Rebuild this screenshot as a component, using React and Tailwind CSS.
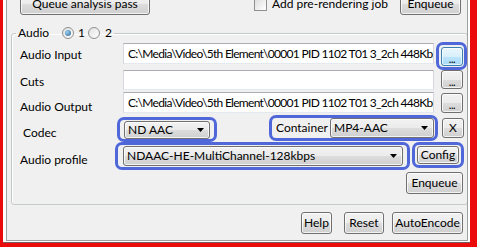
import React from "react";

const BTN =
  "flex items-center justify-center rounded-[3px] border border-[#707070] bg-[linear-gradient(#f2f2f2_0%,#ebebeb_50%,#dddddd_50%,#cfcfcf_100%)] shadow-[inset_0_0_0_1px_rgba(255,255,255,0.75)] leading-none text-black";
const BTN_HOT =
  "flex items-center justify-center rounded-[3px] border border-[#3c7fb1] bg-[linear-gradient(#eaf6fd_0%,#d9f0fc_50%,#bee6fd_50%,#a7d9f5_100%)] shadow-[inset_0_0_0_1px_rgba(255,255,255,0.7)] leading-none text-black";
const RING = "rounded-[7px] border-[3px] border-[#5067d9]";

function Btn({ className = "", hot, children }) {
  return (
    <button type="button" className={`${hot ? BTN_HOT : BTN} ${className}`}>
      {children}
    </button>
  );
}

function Dots({ className = "", hot }) {
  return (
    <Btn hot={hot} className={`w-[22px] ${className}`}>
      <span className="mt-[3px] text-[11px] tracking-[-0.5px]">...</span>
    </Btn>
  );
}

function TextBox({ value = "", className = "" }) {
  return (
    <div
      className={`flex items-center overflow-hidden whitespace-nowrap border border-[#abadb3] border-x-[#d5d8de] border-b-[#e3e9ef] bg-white pl-[4px] tracking-[-0.7px] ${className}`}
    >
      {value}
    </div>
  );
}

function Combo({ value, className = "" }) {
  return (
    <div
      className={`flex items-center rounded-[3px] border border-[#707070] bg-[linear-gradient(#f2f2f2_0%,#ebebeb_50%,#dddddd_50%,#cfcfcf_100%)] shadow-[inset_0_0_0_1px_rgba(255,255,255,0.75)] pl-[3px] pr-[5px] ${className}`}
    >
      <span className="flex-1 truncate">{value}</span>
      <svg width="7" height="4" viewBox="0 0 7 4">
        <path d="M0 0h7L3.5 4z" fill="#000" />
      </svg>
    </div>
  );
}

function Radio({ on }) {
  return (
    <span className="flex h-[12px] w-[12px] items-center justify-center rounded-full border border-[#8e8f8f] bg-[linear-gradient(135deg,#e0e0e0,#ffffff)]">
      {on && (
        <span className="h-[6px] w-[6px] rounded-full bg-[radial-gradient(circle_at_35%_35%,#9bd0f2,#2a628d)]" />
      )}
    </span>
  );
}

const PATH = "C:\\Media\\Video\\5th Element\\00001 PID 1102 T01 3_2ch 448Kbps";

export default function App() {
  return (
    <div className="h-[247px] w-[477px] bg-[#ec0b0b] pb-[4px] pl-[3px] pr-[7px] font-['Lato',sans-serif] text-[12px] text-black">
      <div className="h-full border-b border-[#7a5a5a] bg-white pb-[1px] pl-[3px] pr-[2px]">
        <div className="h-full overflow-hidden border-x border-b border-[#a0a0a0] bg-[#f0f0f0]">
          {/* top row, cut off by the window edge */}
          <div className="-mt-[7px] flex h-[22px] items-center">
            <Btn className="ml-[13px] h-[22px] w-[130px]">Queue analysis pass</Btn>
            <span className="ml-[104px] h-[13px] w-[13px] border border-[#8e8f8f] bg-[linear-gradient(135deg,#dcdcdc,#ffffff)]" />
            <span className="ml-[5px]">Add pre-rendering job</span>
            <Btn className="ml-auto mr-[6px] h-[22px] w-[61px]">Enqueue</Btn>
          </div>

          {/* Audio group */}
          <fieldset className="ml-[4px] mr-[1px] mt-[10px] h-[180px] rounded-[3px] border border-[#c5cacd] pl-[8px] shadow-[inset_1px_1px_0_#fff]">
            <legend className="-ml-[4px] px-[2px]">
              <span className="flex h-[16px] items-center">
                <span>Audio</span>
                <span className="ml-[13px]">
                  <Radio on />
                </span>
                <span className="ml-[4px]">1</span>
                <span className="ml-[3px]">
                  <Radio />
                </span>
                <span className="ml-[5px]">2</span>
              </span>
            </legend>

            {/* Audio Input */}
            <div className="flex h-[29px] items-start">
              <span className="mt-[5px] w-[103px]">Audio Input</span>
              <TextBox value={PATH} className="mt-[2px] h-[21px] w-[311px]" />
              <div className={`${RING} ml-[2px] mt-[1px] pb-[1px] pl-[2px] pr-[1px] pt-[2px]`}>
                <Dots hot className="h-[19px]" />
              </div>
            </div>

            {/* Cuts */}
            <div className="flex h-[20px] items-start">
              <span className="mt-[3px] w-[103px]">Cuts</span>
              <TextBox className="h-[20px] w-[311px]" />
              <Dots className="ml-[7px] h-[19px]" />
            </div>

            {/* Audio Output */}
            <div className="mt-[2px] flex h-[22px] items-start">
              <span className="mt-[6px] w-[103px]">Audio Output</span>
              <TextBox value={PATH} className="h-[21px] w-[311px]" />
              <Dots className="ml-[7px] mt-[1px] h-[20px]" />
            </div>

            {/* Codec / Container */}
            <div className="flex h-[27px] items-start">
              <span className="mt-[10px] w-[97px] pl-[3px]">Codec</span>
              <div className={`${RING} mt-[3px] px-[4px] pt-[1px]`}>
                <Combo value="ND AAC" className="h-[18px] w-[86px]" />
              </div>
              <div className={`${RING} ml-[52px] mt-[1px] flex items-center pl-[4px] pr-[1px]`}>
                <span className="w-[54px]">Container</span>
                <Combo value="MP4-AAC" className="h-[20px] w-[104px]" />
              </div>
              <Btn className="ml-[4px] mt-[4px] h-[20px] w-[22px]">X</Btn>
            </div>

            {/* Audio profile */}
            <div className="mt-[1px] flex h-[28px] items-start">
              <span className="mt-[9px] w-[95px]">Audio profile</span>
              <div className={`${RING} py-[1px] pl-[5px] pr-[4px]`}>
                <Combo value="NDAAC-HE-MultiChannel-128kbps" className="h-[20px] w-[280px]" />
              </div>
              <div className={`${RING} ml-[2px] px-[2px] py-[1px]`}>
                <Btn className="h-[18px] w-[42px]">Config</Btn>
              </div>
            </div>

            <div className="mr-[4px] mt-[2px] flex justify-end">
              <Btn className="h-[22px] w-[57px]">Enqueue</Btn>
            </div>
          </fieldset>

          {/* bottom buttons */}
          <div className="mr-[4px] mt-[7px] flex justify-end">
            <Btn className="h-[22px] w-[31px]">Help</Btn>
            <Btn className="ml-[12px] h-[22px] w-[40px]">Reset</Btn>
            <Btn className="ml-[8px] h-[22px] w-[71px]">AutoEncode</Btn>
          </div>
        </div>
      </div>
    </div>
  );
}
